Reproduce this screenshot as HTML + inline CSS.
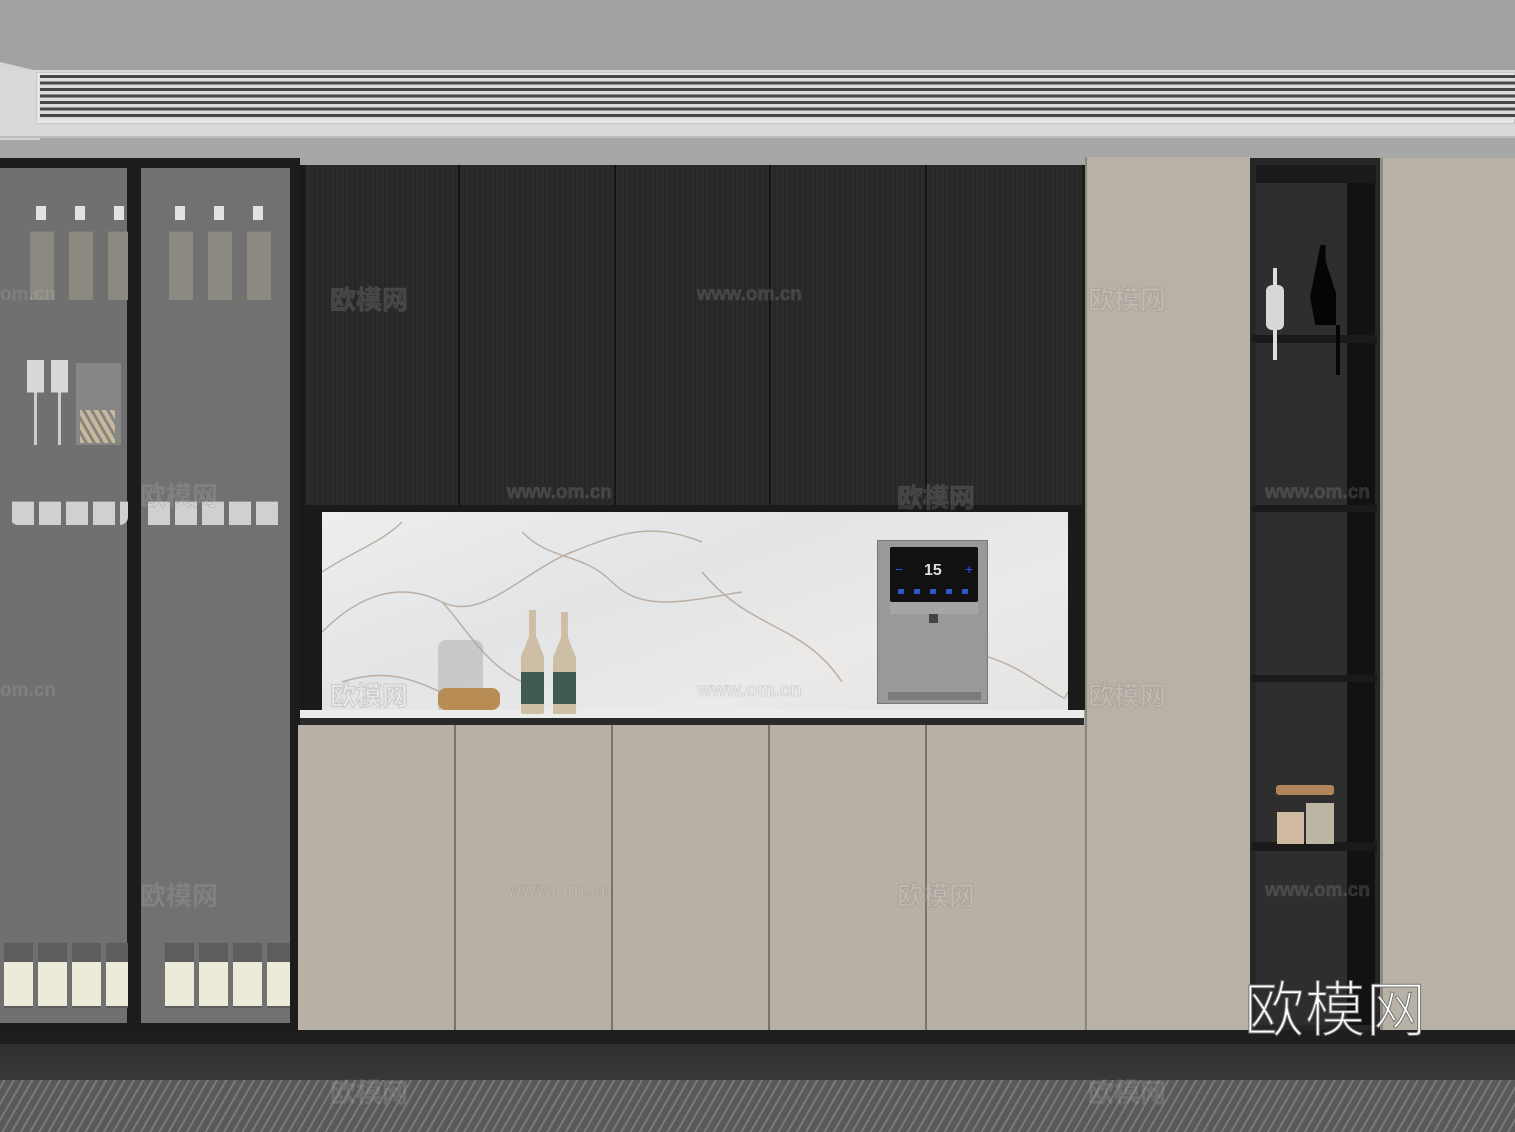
<!DOCTYPE html>
<html><head><meta charset="utf-8"><style>
*{margin:0;padding:0;box-sizing:border-box}
body{width:1515px;height:1132px;overflow:hidden;position:relative;background:#a6a6a6;font-family:"Liberation Sans","Noto Sans CJK SC",sans-serif}
div{position:absolute}
.wm{color:rgba(255,255,255,0.12);font-size:26px;font-weight:bold;-webkit-text-stroke:1px rgba(120,120,120,0.25)}
.wm2{color:rgba(255,255,255,0.12);font-size:19px;font-weight:bold;-webkit-text-stroke:1px rgba(120,120,120,0.2)}
</style></head><body>
<div style="left:0;top:0;width:1515px;height:70px;background:#a2a2a2"></div>
<div style="left:0;top:62px;width:40px;height:80px;background:#d6d6d6;clip-path:polygon(0 0,100% 12%,100% 100%,0 100%)"></div>
<div style="left:0;top:70px;width:1515px;height:68px;background:#d9d9d9;border-bottom:2px solid #bdbdbd"></div>
<div style="left:36px;top:72px;width:1479px;height:52px;background:#e6e6e6;border:1px solid #c8c8c8"></div>
<div style="left:40px;top:75px;width:1475px;height:44px;background:repeating-linear-gradient(#464646 0 3px,#dcdcdc 3px 6.5px)"></div>
<div style="left:0;top:140px;width:1515px;height:25px;background:#a7a7a7"></div>

<!-- glass cabinet -->
<div style="left:0;top:158px;width:300px;height:875px;background:#1c1c1c"></div>
<div style="left:0;top:168px;width:127px;height:855px;background:#707070"></div>
<div style="left:141px;top:168px;width:149px;height:855px;background:#717171"></div>
<!-- bottles top -->
<div style="left:28px;top:205px;width:100px;height:95px;background:repeating-linear-gradient(90deg,transparent 0 2px,#8c8a80 2px 26px,transparent 26px 39px);clip-path:polygon(0 28%,100% 28%,100% 100%,0 100%)"></div>
<div style="left:167px;top:205px;width:110px;height:95px;background:repeating-linear-gradient(90deg,transparent 0 2px,#8c8a80 2px 26px,transparent 26px 39px);clip-path:polygon(0 28%,100% 28%,100% 100%,0 100%)"></div>
<div style="left:36px;top:206px;width:90px;height:14px;background:repeating-linear-gradient(90deg,#e2e2e2 0 10px,transparent 10px 39px)"></div>
<div style="left:175px;top:206px;width:100px;height:14px;background:repeating-linear-gradient(90deg,#e2e2e2 0 10px,transparent 10px 39px)"></div>
<!-- flutes -->
<div style="left:27px;top:360px;width:17px;height:85px;background:linear-gradient(#d8d8d8 0 38%,transparent 38%),linear-gradient(90deg,transparent 7px,#ccc 7px 10px,transparent 10px)"></div>
<div style="left:51px;top:360px;width:17px;height:85px;background:linear-gradient(#d8d8d8 0 38%,transparent 38%),linear-gradient(90deg,transparent 7px,#ccc 7px 10px,transparent 10px)"></div>
<div style="left:76px;top:363px;width:45px;height:82px;background:#868686"></div>
<div style="left:80px;top:410px;width:35px;height:33px;background:repeating-linear-gradient(60deg,#c9b89a 0 4px,transparent 4px 7px)"></div>
<!-- wine glasses -->
<div style="left:10px;top:473px;width:118px;height:52px;background:repeating-linear-gradient(90deg,transparent 0 2px,#d0d0d0 2px 24px,transparent 24px 27px);clip-path:polygon(0 55%,100% 55%,100% 100%,0 100%);border-radius:0 0 8px 8px"></div>
<div style="left:146px;top:473px;width:135px;height:52px;background:repeating-linear-gradient(90deg,transparent 0 2px,#d0d0d0 2px 24px,transparent 24px 27px);clip-path:polygon(0 55%,100% 55%,100% 100%,0 100%)"></div>
<!-- bottom bottles -->
<div style="left:4px;top:915px;width:124px;height:93px;background:repeating-linear-gradient(90deg,#5d5d5d 0 29px,transparent 29px 34px);clip-path:polygon(0 30%,100% 30%,100% 100%,0 100%)"></div>
<div style="left:4px;top:962px;width:124px;height:44px;background:repeating-linear-gradient(90deg,#ecead8 0 29px,transparent 29px 34px)"></div>
<div style="left:165px;top:915px;width:125px;height:93px;background:repeating-linear-gradient(90deg,#5d5d5d 0 29px,transparent 29px 34px);clip-path:polygon(0 30%,100% 30%,100% 100%,0 100%)"></div>
<div style="left:165px;top:962px;width:125px;height:44px;background:repeating-linear-gradient(90deg,#ecead8 0 29px,transparent 29px 34px)"></div>

<!-- upper cabinet -->
<div style="left:300px;top:165px;width:785px;height:545px;background:#1a1a1a"></div>
<div style="left:306px;top:165px;width:776px;height:340px;background:repeating-linear-gradient(90deg,#2b2b2b 0 3px,#272727 3px 5px);"></div>
<div style="left:458px;top:165px;width:2px;height:340px;background:#151515"></div>
<div style="left:614px;top:165px;width:2px;height:340px;background:#151515"></div>
<div style="left:769px;top:165px;width:2px;height:340px;background:#151515"></div>
<div style="left:925px;top:165px;width:2px;height:340px;background:#151515"></div>
<!-- marble -->
<div style="left:322px;top:512px;width:746px;height:198px;background:linear-gradient(160deg,#eeeeee,#e2e4e6 40%,#eceae8 70%,#e4e4e4)"></div>
<svg style="position:absolute;left:322px;top:512px" width="746" height="198"><g fill="none" stroke="#a89888" stroke-width="1.5" opacity=".7"><path d="M0 120 C40 80 80 70 120 90 S200 60 250 40 S330 10 380 30"/><path d="M120 90 C140 110 160 150 200 170"/><path d="M200 20 C230 50 260 40 290 70 S360 90 420 80"/><path d="M380 60 C430 120 480 110 520 170"/><path d="M0 60 C30 40 60 30 80 10"/><path d="M560 120 C600 140 650 130 700 160 S740 190 746 180"/><path d="M20 170 C80 150 110 180 160 198"/></g></svg>
<!-- counter -->
<div style="left:300px;top:710px;width:784px;height:8px;background:#ececec"></div>
<div style="left:300px;top:718px;width:784px;height:7px;background:#2a2a2a"></div>
<!-- items -->
<div style="left:438px;top:640px;width:45px;height:70px;background:rgba(150,150,150,0.35);border-radius:8px 8px 2px 2px"></div>
<div style="left:438px;top:688px;width:62px;height:22px;background:#b88d55;border-radius:8px"></div>
<div style="left:521px;top:610px;width:23px;height:104px;background:#cdbfa5;border-radius:8px 8px 2px 2px;clip-path:polygon(35% 0,65% 0,65% 25%,100% 45%,100% 100%,0 100%,0 45%,35% 25%)"></div>
<div style="left:521px;top:672px;width:23px;height:32px;background:#3f5a4e"></div>
<div style="left:553px;top:612px;width:23px;height:102px;background:#cdbfa5;clip-path:polygon(35% 0,65% 0,65% 25%,100% 45%,100% 100%,0 100%,0 45%,35% 25%)"></div>
<div style="left:553px;top:672px;width:23px;height:32px;background:#3f5a4e"></div>
<!-- dispenser -->
<div style="left:877px;top:540px;width:111px;height:164px;background:#999;border:1px solid #777"></div>
<div style="left:890px;top:547px;width:88px;height:55px;background:#111;border-radius:2px"></div>
<div style="left:890px;top:602px;width:88px;height:12px;background:#a5a5a5"></div>
<div style="left:929px;top:614px;width:9px;height:9px;background:#444"></div>
<div style="left:924px;top:562px;color:#ddd;font-size:16px;font-weight:bold">15</div>
<div style="left:895px;top:561px;color:#2a55ff;font-size:14px">−</div>
<div style="left:965px;top:561px;color:#2a55ff;font-size:14px">+</div>
<div style="left:898px;top:589px;width:75px;height:5px;background:repeating-linear-gradient(90deg,#2d55cc 0 6px,transparent 6px 16px)"></div>
<div style="left:888px;top:692px;width:93px;height:8px;background:#7b7b7b"></div>
<!-- lower cabinets -->
<div style="left:298px;top:725px;width:786px;height:305px;background:#b7b0a4"></div>
<div style="left:454px;top:725px;width:2px;height:305px;background:#7a756c"></div>
<div style="left:611px;top:725px;width:2px;height:305px;background:#7a756c"></div>
<div style="left:768px;top:725px;width:2px;height:305px;background:#7a756c"></div>
<div style="left:925px;top:725px;width:2px;height:305px;background:#7a756c"></div>

<!-- tall panels -->
<div style="left:1085px;top:157px;width:165px;height:873px;background:#b8b1a5;border-left:2px solid #8c877e"></div>
<div style="left:1250px;top:158px;width:130px;height:872px;background:#262626"></div>
<div style="left:1256px;top:165px;width:92px;height:860px;background:#2e2e2e"></div>
<div style="left:1347px;top:165px;width:28px;height:860px;background:#121212"></div>
<div style="left:1256px;top:165px;width:120px;height:18px;background:#1a1a1a"></div>
<div style="left:1252px;top:335px;width:125px;height:8px;background:#1a1a1a"></div>
<div style="left:1252px;top:505px;width:125px;height:7px;background:#1a1a1a"></div>
<div style="left:1252px;top:675px;width:125px;height:7px;background:#1a1a1a"></div>
<div style="left:1252px;top:842px;width:125px;height:9px;background:#1a1a1a"></div>
<div style="left:1380px;top:158px;width:135px;height:872px;background:#b8b1a5;border-left:3px solid #8f8a80"></div>
<!-- figures -->
<div style="left:1268px;top:268px;width:18px;height:92px;background:linear-gradient(90deg,transparent 5px,#ddd 5px 9px,transparent 9px);"></div>
<div style="left:1266px;top:285px;width:18px;height:45px;background:#d8d8d8;border-radius:6px"></div>
<div style="left:1310px;top:245px;width:26px;height:80px;background:#050505;clip-path:polygon(40% 0,60% 0,60% 20%,100% 60%,100% 100%,20% 100%,0 65%)"></div>
<div style="left:1336px;top:325px;width:4px;height:50px;background:#050505"></div>
<!-- jars -->
<div style="left:1276px;top:785px;width:58px;height:10px;background:#b0855a;border-radius:3px"></div>
<div style="left:1277px;top:812px;width:27px;height:32px;background:#cfb9a0"></div>
<div style="left:1306px;top:803px;width:28px;height:41px;background:#bdb6a4"></div>

<!-- floor -->
<div style="left:0;top:1030px;width:1515px;height:14px;background:#1e1e1e"></div>
<div style="left:0;top:1044px;width:1515px;height:36px;background:linear-gradient(#303030,#383838)"></div>
<div style="left:0;top:1080px;width:1515px;height:52px;background:repeating-linear-gradient(120deg,#595959 0 3px,#7a7a7a 3px 5px,#5a5a5a 5px 8px)"></div>

<!-- watermarks -->
<div class="wm" style="left:330px;top:280px">欧模网</div>
<div class="wm2" style="left:697px;top:284px">www.om.cn</div>
<div class="wm" style="left:1088px;top:280px">欧模网</div>
<div class="wm2" style="left:507px;top:482px">www.om.cn</div>
<div class="wm" style="left:897px;top:478px">欧模网</div>
<div class="wm" style="left:140px;top:476px">欧模网</div>
<div class="wm2" style="left:0;top:284px">om.cn</div>
<div class="wm" style="left:330px;top:676px">欧模网</div>
<div class="wm2" style="left:697px;top:680px">www.om.cn</div>
<div class="wm" style="left:1088px;top:676px">欧模网</div>
<div class="wm2" style="left:0;top:680px">om.cn</div>
<div class="wm" style="left:140px;top:876px">欧模网</div>
<div class="wm2" style="left:507px;top:880px">www.om.cn</div>
<div class="wm" style="left:897px;top:876px">欧模网</div>
<div class="wm2" style="left:1265px;top:880px">www.om.cn</div>
<div class="wm2" style="left:1265px;top:482px">www.om.cn</div>
<div class="wm" style="left:330px;top:1073px">欧模网</div>
<div class="wm" style="left:1088px;top:1073px">欧模网</div>
<div style="left:1244px;top:968px;font-family:'Noto Sans CJK SC',sans-serif;font-size:60px;line-height:76px;color:#fff;font-weight:300;-webkit-text-stroke:1px #777;letter-spacing:1px">欧模网</div>
</body></html>
